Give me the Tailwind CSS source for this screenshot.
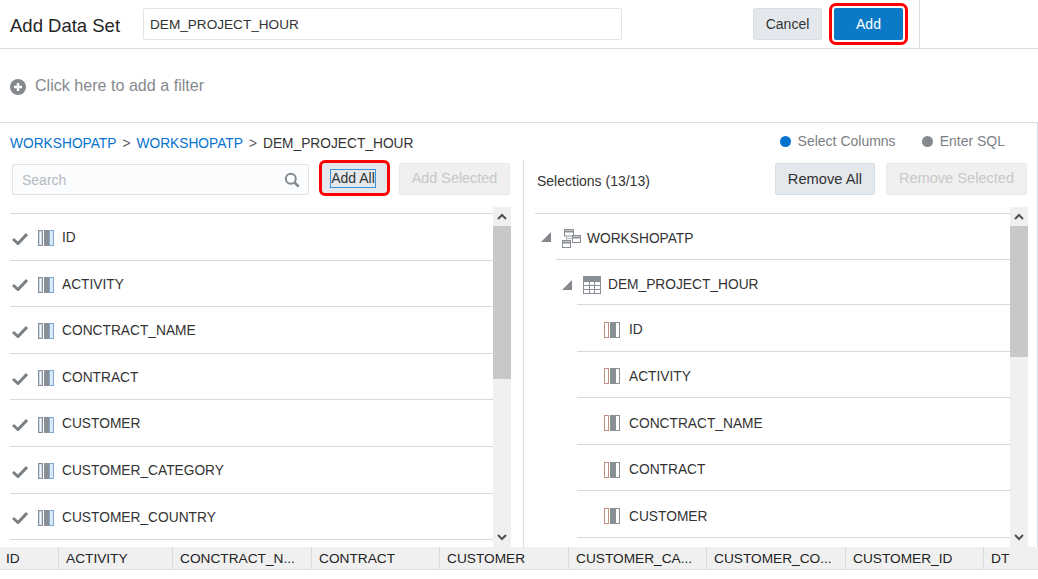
<!DOCTYPE html>
<html lang="en">
<head>
  <meta charset="UTF-8" />
  <meta name="viewport" content="width=device-width, initial-scale=1.0" />
  <title>Add Data Set</title>
  <script src="https://cdn.jsdelivr.net/npm/@tailwindcss/browser@4"></script>
</head>
<body class="bg-white w-[1038px] h-[579px] overflow-hidden font-['Liberation_Sans',Arial,sans-serif] text-[14px] text-[#333]">
  <svg class="hidden">
    <symbol id="col-l" viewBox="0 0 16 16">
      <rect x="0.5" y="0.5" width="4" height="15" fill="#fff" stroke="#8a8f96"/>
      <rect x="1.5" y="1.5" width="2" height="13" fill="#f3f6fa" stroke="#a8c6e6" stroke-width="0.6"/>
      <rect x="6" y="0" width="5" height="16" fill="#8a8f96"/>
      <rect x="11.5" y="0.5" width="4" height="15" fill="#dbe8f5" stroke="#7fa9d4"/>
    </symbol>
    <symbol id="col-r" viewBox="0 0 16 16">
      <rect x="0.5" y="0.5" width="4" height="15" fill="#fff" stroke="#c08f80"/>
      <rect x="6" y="0" width="5" height="16" fill="#8a8f96"/>
      <rect x="11.5" y="0.5" width="4" height="15" fill="#fff" stroke="#8a8f96"/>
    </symbol>
    <symbol id="check" viewBox="0 0 16 13">
      <path d="M1 7l5 4.5L15 2" fill="none" stroke="#7b8086" stroke-width="3"/>
    </symbol>
    <symbol id="up" viewBox="0 0 10 7"><path d="M1 6l4-4 4 4" fill="none" stroke="#505050" stroke-width="2"/></symbol>
    <symbol id="down" viewBox="0 0 10 7"><path d="M1 1l4 4 4-4" fill="none" stroke="#505050" stroke-width="2"/></symbol>
  </svg>

  <header class="h-[49px] border-b border-[#d6dfe6] flex items-start">
    <h1 class="w-[143px] pl-[10px] pt-[15px] text-[18.5px] leading-[22px] text-[#252525]">Add Data Set</h1>
    <input value="DEM_PROJECT_HOUR" class="mt-[8px] w-[479px] h-[32px] px-[6px] border border-[#dfe4ea] rounded-[2px] text-[13.6px] text-[#333]" />
    <button class="ml-[131px] mt-[8px] w-[69px] h-[32px] bg-[#e4e8ec] border border-[#d6dfe6] rounded-[2px] text-[14px]">Cancel</button>
    <button class="ml-[12px] mt-[8px] w-[69px] h-[32px] bg-[#0a7ac6] rounded-[2px] text-[14px] text-white outline-3 outline-[#f00] outline-offset-2">Add</button>
    <div class="ml-[16px] h-full border-l border-[#d6dfe6]"></div>
  </header>

  <div class="h-[74px] border-b border-[#d6dfe6] pl-[10px] flex items-center">
    <svg class="w-[16px] h-[16px] mt-[3px]" viewBox="0 0 16 16">
      <circle cx="8" cy="8" r="8" fill="#85898e"/>
      <path d="M8 4v8M4 8h8" stroke="#fff" stroke-width="2.4"/>
    </svg>
    <span class="ml-[9px] text-[16.1px] text-[#85898e]">Click here to add a filter</span>
  </div>

  <main class="h-[424px] border-r border-[#d6dfe6] flex flex-col">
    <div class="h-[37px] pl-[10px] pr-[32px] flex items-start justify-between">
      <div class="pt-[13px] leading-[16px] text-[13.75px] flex gap-[6px]">
        <span class="text-[#0572ce]">WORKSHOPATP</span>
        <span class="text-[#555]">&gt;</span>
        <span class="text-[#0572ce]">WORKSHOPATP</span>
        <span class="text-[#555]">&gt;</span>
        <span>DEM_PROJECT_HOUR</span>
      </div>
      <div class="pt-[10px] flex items-center leading-[16px] text-[#7b8086]">
        <span class="w-[11px] h-[11px] rounded-full bg-[#0572ce]"></span>
        <span class="ml-[7px]">Select Columns</span>
        <span class="ml-[26px] w-[11px] h-[11px] rounded-full bg-[#85898e]"></span>
        <span class="ml-[7px]">Enter SQL</span>
      </div>
    </div>

    <div class="flex-1 flex min-h-0">
      <!-- available columns -->
      <section class="w-[524px] border-r border-[#d6dfe6] flex flex-col">
        <div class="h-[47px] flex items-start">
          <div class="ml-[12px] mt-[4px] w-[297px] h-[31px] bg-[#fbfcfd] border border-[#dfe4ea] rounded-[2px] flex items-center justify-between pl-[9px] pr-[8px]">
            <span class="text-[#b5b9bd] pt-[2px]">Search</span>
            <svg class="w-[16px] h-[16px]" viewBox="0 0 16 16" fill="none" stroke="#85898e">
              <circle cx="6.8" cy="6.8" r="5" stroke-width="2"/>
              <path d="M10.5 10.5l4.2 4.2" stroke-width="2.6"/>
            </svg>
          </div>
          <button class="ml-[10px] w-[71px] h-[36px] bg-[#e4e8ec] border-3 border-[#f00] rounded-[6px] flex items-center justify-center pr-[3px]">
            <span class="border border-[#3d94dc] leading-[17px] text-[14px]">Add All</span>
          </button>
          <button class="ml-[9px] mt-[3px] w-[111px] h-[32px] bg-[#f0f0f0] border border-[#e9e9e9] rounded-[2px] text-[14.4px] text-[#c8c8c8]">Add Selected</button>
        </div>
        <div class="flex-1 pl-[10px] flex min-h-0">
          <ul id="left-list" class="w-[483px] pt-[6px] overflow-hidden text-[13.75px]"></ul>
          <div class="w-[18px] bg-[#f0f0f0] flex flex-col items-center">
            <div class="h-[19px] flex items-center"><svg class="w-[10px] h-[7px]"><use href="#up"/></svg></div>
            <div class="w-full h-[153px] bg-[#c8c8c8]"></div>
            <div class="mt-auto h-[19px] flex items-center"><svg class="w-[10px] h-[7px]"><use href="#down"/></svg></div>
          </div>
        </div>
      </section>

      <!-- selections -->
      <section class="flex-1 flex flex-col">
        <div class="h-[47px] flex items-start pl-[13px]">
          <span class="w-[238px] pt-[13px] leading-[16px]">Selections (13/13)</span>
          <button class="mt-[3px] w-[100px] h-[32px] bg-[#e4e8ec] border border-[#d6dfe6] rounded-[2px] text-[14.7px]">Remove All</button>
          <button class="ml-[11px] mt-[3px] w-[141px] h-[32px] bg-[#f0f0f0] border border-[#e9e9e9] rounded-[2px] text-[14.6px] text-[#c8c8c8]">Remove Selected</button>
        </div>
        <div class="flex-1 pl-[11px] flex min-h-0">
          <ul class="w-[475px] pt-[6px] overflow-hidden text-[13.75px]">
            <li class="h-[46px] border-t border-[#d9d9d9] flex items-center pl-[6px] pt-[6px]">
              <span class="w-0 h-0 border-l-[10px] border-l-transparent [border-bottom:10px_solid_#85898e] -mt-[5px]"></span>
              <svg class="ml-[11px] w-[19px] h-[19px] -mt-[2px]" viewBox="0 0 19 19" fill="#fff" stroke="#8a8f96">
                <rect x="2.5" y="0.5" width="9" height="6.5"/><path d="M2.5 2.5h9" stroke-width="2"/>
                <rect x="10.5" y="6.5" width="8" height="7"/><path d="M10.5 8.5h8" stroke-width="2"/>
                <rect x="0.5" y="11.5" width="8" height="7"/><path d="M0.5 13.5h8" stroke-width="2"/>
                <path d="M4.5 7v4M4.5 9.5h6" stroke="#b8bcc0"/>
              </svg>
              <span class="ml-[6px]">WORKSHOPATP</span>
            </li>
            <li class="ml-[21px] h-[45px] border-t border-[#d9d9d9] flex items-center pl-[6px] pt-[6px]">
              <span class="w-0 h-0 border-l-[10px] border-l-transparent [border-bottom:10px_solid_#85898e]"></span>
              <svg class="ml-[11px] w-[18px] h-[18px]" viewBox="0 0 18 18" fill="none">
                <rect width="18" height="18" fill="#8a8f96"/>
                <rect x="1" y="6" width="16" height="11" fill="#fff"/>
                <path d="M6.5 6v11M11.5 6v11M1 9.5h16M1 13.5h16" stroke="#8a8f96"/>
              </svg>
              <span class="ml-[7px]">DEM_PROJECT_HOUR</span>
            </li>
            <li class="ml-[42px] h-[46.6px] border-t border-[#d9d9d9] flex items-center pl-[27px] pt-[6px]"><svg class="w-[16px] h-[16px] -mt-[2px]"><use href="#col-r"/></svg><span class="ml-[9px]">ID</span></li>
            <li class="ml-[42px] h-[46.6px] border-t border-[#d9d9d9] flex items-center pl-[27px] pt-[6px]"><svg class="w-[16px] h-[16px] -mt-[2px]"><use href="#col-r"/></svg><span class="ml-[9px]">ACTIVITY</span></li>
            <li class="ml-[42px] h-[46.6px] border-t border-[#d9d9d9] flex items-center pl-[27px] pt-[6px]"><svg class="w-[16px] h-[16px] -mt-[2px]"><use href="#col-r"/></svg><span class="ml-[9px]">CONCTRACT_NAME</span></li>
            <li class="ml-[42px] h-[46.6px] border-t border-[#d9d9d9] flex items-center pl-[27px] pt-[6px]"><svg class="w-[16px] h-[16px] -mt-[2px]"><use href="#col-r"/></svg><span class="ml-[9px]">CONTRACT</span></li>
            <li class="ml-[42px] h-[46.6px] border-t border-[#d9d9d9] flex items-center pl-[27px] pt-[6px]"><svg class="w-[16px] h-[16px] -mt-[2px]"><use href="#col-r"/></svg><span class="ml-[9px]">CUSTOMER</span></li>
            <li class="ml-[42px] h-[46.6px] border-t border-[#d9d9d9]"></li>
          </ul>
          <div class="w-[18px] bg-[#f0f0f0] flex flex-col items-center">
            <div class="h-[19px] flex items-center"><svg class="w-[10px] h-[7px]"><use href="#up"/></svg></div>
            <div class="w-full h-[131px] bg-[#c8c8c8]"></div>
            <div class="mt-auto h-[19px] flex items-center"><svg class="w-[10px] h-[7px]"><use href="#down"/></svg></div>
          </div>
        </div>
      </section>
    </div>
  </main>

  <footer class="h-[23px] bg-[#f0f0f0] border-b border-[#e0e0e0] flex text-[13.7px] leading-[24px] text-[#222]">
    <div class="w-[59px] pl-[6px] border-r border-[#dcdcdc]">ID</div>
    <div class="w-[114px] pl-[7px] border-r border-[#dcdcdc]">ACTIVITY</div>
    <div class="w-[139px] pl-[7px] border-r border-[#dcdcdc]">CONCTRACT_N...</div>
    <div class="w-[128px] pl-[7px] border-r border-[#dcdcdc]">CONTRACT</div>
    <div class="w-[129px] pl-[7px] border-r border-[#dcdcdc]">CUSTOMER</div>
    <div class="w-[138px] pl-[7px] border-r border-[#dcdcdc]">CUSTOMER_CA...</div>
    <div class="w-[139px] pl-[7px] border-r border-[#dcdcdc]">CUSTOMER_CO...</div>
    <div class="w-[138px] pl-[7px] border-r border-[#dcdcdc]">CUSTOMER_ID</div>
    <div class="flex-1 pl-[7px]">DT</div>
  </footer>

  <script>
    const columns = ['ID', 'ACTIVITY', 'CONCTRACT_NAME', 'CONTRACT', 'CUSTOMER', 'CUSTOMER_CATEGORY', 'CUSTOMER_COUNTRY', ''];
    document.getElementById('left-list').innerHTML = columns.map(name => name ? `
      <li class="h-[46.6px] border-t border-[#d9d9d9] flex items-center pl-[2px] pt-[3px]">
        <svg class="w-[16px] h-[13px]"><use href="#check"/></svg>
        <svg class="ml-[10px] w-[16px] h-[16px]"><use href="#col-l"/></svg>
        <span class="ml-[8px]">${name}</span>
      </li>` : '<li class="h-[46.6px] border-t border-[#d9d9d9]"></li>').join('');
  </script>
</body>
</html>
